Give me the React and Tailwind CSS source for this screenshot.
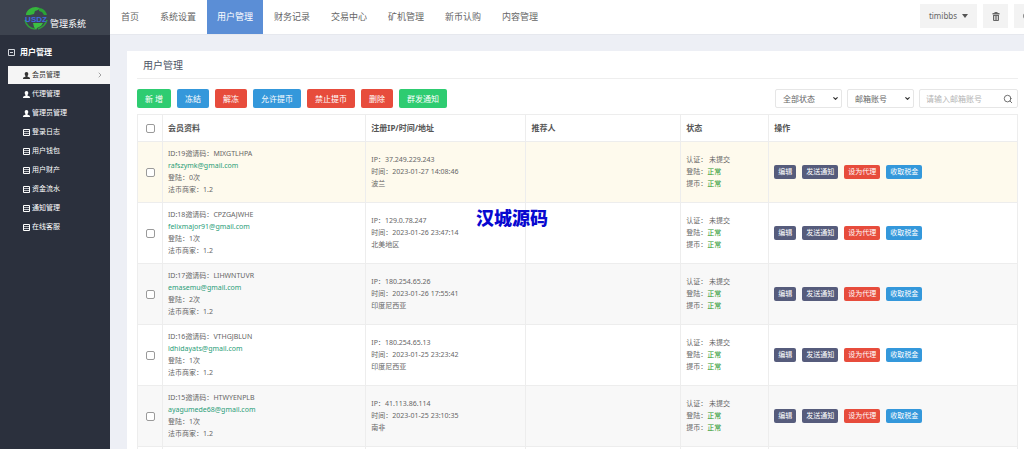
import React, { useState } from 'react';
import { ChevronDown, ChevronRight, Search } from 'lucide-react';
import { FaRegCircle } from 'react-icons/fa';

const navItems = ['首页', '系统设置', '用户管理', '财务记录', '交易中心', '矿机管理', '新币认购', '内容管理'];

const menuItems = [
  { name: '会员管理', icon: UserIcon },
  { name: '代理管理', icon: UserIcon },
  { name: '管理员管理', icon: UserIcon },
  { name: '登录日志', icon: ListIcon },
  { name: '用户钱包', icon: ListIcon },
  { name: '用户财产', icon: ListIcon },
  { name: '资金流水', icon: ListIcon },
  { name: '通知管理', icon: ListIcon },
  { name: '在线客服', icon: ListIcon },
];

const toolbar = [
  { name: '新 增', color: 'bg-[#2ecc71]' },
  { name: '冻结', color: 'bg-[#3498db]' },
  { name: '解冻', color: 'bg-[#e74c3c]' },
  { name: '允许提币', color: 'bg-[#3498db]' },
  { name: '禁止提币', color: 'bg-[#e74c3c]' },
  { name: '删除', color: 'bg-[#e74c3c]' },
  { name: '群发通知', color: 'bg-[#2ecc71]' },
];

const actions = [
  { name: '编辑', color: 'bg-[#565c7c]' },
  { name: '发送通知', color: 'bg-[#565c7c]' },
  { name: '设为代理', color: 'bg-[#e74c3c]' },
  { name: '收取税金', color: 'bg-[#3498db]' },
];

const members = [
  { id: 19, code: 'MIXGTLHPA', email: 'rafszymk@gmail.com', logins: 0, ip: '37.249.229.243', time: '2023-01-27 14:08:46', area: '波兰' },
  { id: 18, code: 'CPZGAJWHE', email: 'felixmajor91@gmail.com', logins: 1, ip: '129.0.78.247', time: '2023-01-26 23:47:14', area: '北美地区' },
  { id: 17, code: 'LIHWNTUVR', email: 'emasemu@gmail.com', logins: 2, ip: '180.254.65.26', time: '2023-01-26 17:55:41', area: '印度尼西亚' },
  { id: 16, code: 'VTHGJBLUN', email: 'ldhidayats@gmail.com', logins: 1, ip: '180.254.65.13', time: '2023-01-25 23:23:42', area: '印度尼西亚' },
  { id: 15, code: 'HTWYENPLB', email: 'ayagumede68@gmail.com', logins: 1, ip: '41.113.86.114', time: '2023-01-25 23:10:35', area: '南非' },
];

const cell = 'border border-[#ededed] px-[5px] py-[6px]';

function Logo() {
  return (
    <svg viewBox="0 0 28 26" className="w-7 h-[26px]" aria-hidden="true">
      <path d="M4 9C5 5 9 2 14 2l4 1-2 2-3 1-1 3-4 1-4 0z" fill="#35b53c" />
      <path d="M17 3c4 0 7 3 8 7l-3 0-2-3-3-1z" fill="#2aa336" />
      <path d="M11 18l6 0 4 0-2 3-4 2-1 2-2-3z" fill="#3cc043" />
      <path d="M3 15c1 5 5 9 10 9M25 15c-1 4-4 7-9 9" fill="none" stroke="#2f9c3a" strokeWidth="1.500" />
      <text x="14" y="17" textAnchor="middle" fontSize="8" fontWeight="700" fontFamily="Liberation Sans" fill="#4168e0">USDZ</text>
    </svg>
  );
}

function UserIcon({ className }) {
  return (
    <svg viewBox="0 0 14 14" fill="currentColor" className={className} aria-hidden="true">
      <path d="M7 0c2.300 0 3.600 1.700 3.600 4 0 1.600-.7 3-1.600 3.900v1.300c0 .5 3.200 1.200 4.200 2 .5.400.8 1.400.8 2.800H0c0-1.400.3-2.400.8-2.800 1-.8 4.200-1.500 4.200-2V7.900C4.100 7 3.400 5.600 3.400 4 3.400 1.700 4.700 0 7 0z" />
    </svg>
  );
}

function ListIcon({ className }) {
  return (
    <svg viewBox="0 0 7 7" fill="none" stroke="currentColor" className={className} aria-hidden="true">
      <path d="M.5.5h6v6h-6z" />
      <path d="M1 2.500h5M1 4.500h5" opacity=".7" />
    </svg>
  );
}

function TrashIcon({ className }) {
  return (
    <svg viewBox="0 0 16 18" fill="currentColor" className={className} aria-hidden="true">
      <path d="M5 0h6v2h4v3H1V2h4z" />
      <path fillRule="evenodd" d="M2 6h12v10.500l-1.500 1.500h-9L2 16.500zM4.500 8v8H6V8zM7.300 8v8h1.400V8zM10 8v8h1.500V8z" />
    </svg>
  );
}

function Checkbox({ label }) {
  return (
    <input
      type="checkbox"
      aria-label={label}
      className="block mx-auto w-[9px] h-[9px] appearance-none rounded-xs border border-[#9a9a9a] bg-white checked:bg-[#3498db]"
    />
  );
}

function FilterSelect({ label, options }) {
  return (
    <div className="relative">
      <select
        aria-label={label}
        className="block w-[67px] h-[19px] appearance-none rounded-xs border border-[#e6e6e6] bg-white pl-[7px] text-[8px] text-[#666]"
      >
        {options.map((o) => (
          <option key={o}>{o}</option>
        ))}
      </select>
      <ChevronDown className="absolute right-[3px] top-[6px] w-[7px] h-[7px] text-[#333] pointer-events-none" strokeWidth={4} />
    </div>
  );
}

export default function App() {
  const [active, setActive] = useState('会员管理');

  return (
    <div className="relative flex h-screen overflow-hidden bg-[#edeff5] font-['Noto_Sans','Noto_Sans_CJK_SC',sans-serif] text-[#666]">
      <aside className="w-[110px] shrink-0 bg-[#2b303d]">
        <div className="flex items-center h-[35px] pl-[22px] bg-[#3d434f] text-white">
          <Logo />
          <span className="pt-[12px] text-[9px] leading-[12px] whitespace-nowrap">管理系统</span>
        </div>
        <div className="flex items-center h-[18px] mt-[8px] mb-[5px] pl-[8px] text-[8px] font-bold text-white">
          <svg viewBox="0 0 7 7" className="w-[7px] h-[7px] mr-[5px]" fill="none" stroke="#d5d8de" aria-hidden="true">
            <path d="M.5.5h6v6h-6zM2 3.500h3" />
          </svg>
          用户管理
        </div>
        <ul className="flex flex-col gap-px pl-[8px]">
          {menuItems.map(({ name, icon: Icon }) => (
            <li key={name}>
              <a
                href="#"
                onClick={() => setActive(name)}
                className={`flex items-center h-[18px] pl-[15px] pr-[6px] text-[7px] ${
                  active === name ? 'bg-[#f5f5f5] text-[#333]' : 'text-white'
                }`}
              >
                <Icon className="w-[7px] h-[7px] mr-[2px]" />
                {name}
                {active === name && <ChevronRight className="ml-auto w-[8px] h-[8px] text-[#777]" />}
              </a>
            </li>
          ))}
        </ul>
      </aside>

      <div className="flex-1 min-w-0">
        <header className="flex justify-between h-[35px] bg-white border-b border-[#e6e8ee] overflow-hidden">
          <nav className="flex gap-px pl-px text-[9px]">
            {navItems.map((name) => (
              <a
                key={name}
                href="#"
                className={`flex items-center px-[10px] whitespace-nowrap ${
                  name === '用户管理' ? 'bg-[#5b8ed6] text-white' : 'text-[#666]'
                }`}
              >
                {name}
              </a>
            ))}
          </nav>
          <div className="flex gap-[6px] pt-[4px] -mr-[15px] text-[8px]">
            <button className="flex items-center justify-center gap-[5px] w-[57px] h-[24px] bg-[#f3f3f3]">
              timibbs
              <svg viewBox="0 0 6 4" className="w-[6px] h-[4px]" fill="#555" aria-hidden="true">
                <path d="M0 0h6L3 4z" />
              </svg>
            </button>
            <button aria-label="清理缓存" className="flex items-center justify-center w-[25px] h-[24px] bg-[#f3f3f3]">
              <TrashIcon className="w-[8px] h-[9px]" />
            </button>
            <button aria-label="退出" className="flex items-center justify-center w-[25px] h-[24px] bg-[#f3f3f3]">
              <FaRegCircle className="w-[8px] h-[8px]" />
            </button>
          </div>
        </header>

        <main className="mt-[16px] ml-[17px] pl-[10px] pr-[6px] h-full bg-white">
          <h1 className="h-[28px] pl-[6px] border-b border-[#eee] text-[10px] leading-[28px] text-[#4d5566]">用户管理</h1>

          <div className="flex items-center justify-between mt-[10px] mb-[6px]">
            <div className="flex gap-[6px]">
              {toolbar.map((b) => (
                <button key={b.name} className={`h-[19px] px-[8px] rounded-xs text-[8px] text-white whitespace-nowrap ${b.color}`}>
                  {b.name}
                </button>
              ))}
            </div>
            <div className="flex gap-[5px]">
              <FilterSelect label="状态" options={['全部状态', '正常', '冻结']} />
              <FilterSelect label="搜索类型" options={['邮箱账号', '邀请码']} />
              <div className="flex items-center w-[99px] h-[19px] pl-[6px] pr-[4px] rounded-xs border border-[#e6e6e6]">
                <input
                  type="text"
                  aria-label="邮箱账号"
                  placeholder="请输入邮箱账号"
                  className="flex-1 min-w-0 text-[8px] outline-none placeholder:text-[#b4b4b4]"
                />
                <button aria-label="搜索">
                  <Search className="w-[10px] h-[10px] text-[#555]" />
                </button>
              </div>
            </div>
          </div>

          <table className="w-full table-fixed border-collapse text-[7px] leading-[12px]">
            <thead>
              <tr className="h-[27px] text-left text-[8px] text-[#555]">
                <th className={`${cell} w-[25px]`}><Checkbox label="全选" /></th>
                <th className={`${cell} w-[23.1%]`}>会员资料</th>
                <th className={`${cell} w-[18.2%]`}>注册IP/时间/地址</th>
                <th className={`${cell} w-[17.6%]`}>推荐人</th>
                <th className={`${cell} w-[10%]`}>状态</th>
                <th className={cell}>操作</th>
              </tr>
            </thead>
            <tbody>
              {members.map((m, i) => (
                <tr key={m.id} className={i === 0 ? 'bg-[#fefaed]' : i % 2 === 0 ? 'bg-[#f8f8f8]' : 'bg-white'}>
                  <td className={cell}><Checkbox label={`选择 ${m.id}`} /></td>
                  <td className={cell}>
                    <div>ID:{m.id}邀请码：{m.code}</div>
                    <div><a href="#" className="text-[#2a9d78]">{m.email}</a></div>
                    <div>登陆：{m.logins}次</div>
                    <div>法币商家：1.2</div>
                  </td>
                  <td className={cell}>
                    <div>IP：{m.ip}</div>
                    <div>时间：{m.time}</div>
                    <div>{m.area}</div>
                  </td>
                  <td className={cell}></td>
                  <td className={cell}>
                    <div>认证：&nbsp;未提交</div>
                    <div>登陆：<span className="text-[#1f962a]">正常</span></div>
                    <div>提币：<span className="text-[#1f962a]">正常</span></div>
                  </td>
                  <td className={cell}>
                    <div className="flex gap-[6px]">
                      {actions.map((a) => (
                        <button key={a.name} className={`h-[14px] px-[4px] rounded-xs text-white whitespace-nowrap ${a.color}`}>
                          {a.name}
                        </button>
                      ))}
                    </div>
                  </td>
                </tr>
              ))}
              <tr>
                <td className={cell}></td>
                <td className={cell}></td>
                <td className={cell}></td>
                <td className={cell}></td>
                <td className={cell}></td>
                <td className={cell}></td>
              </tr>
            </tbody>
          </table>
        </main>
      </div>

      {/* site watermark floats over the page centre */}
      <div className="absolute inset-x-0 top-[207px] text-center text-[18px] leading-[22px] font-black text-[#0808d0] pointer-events-none">
        汉城源码
      </div>
    </div>
  );
}
